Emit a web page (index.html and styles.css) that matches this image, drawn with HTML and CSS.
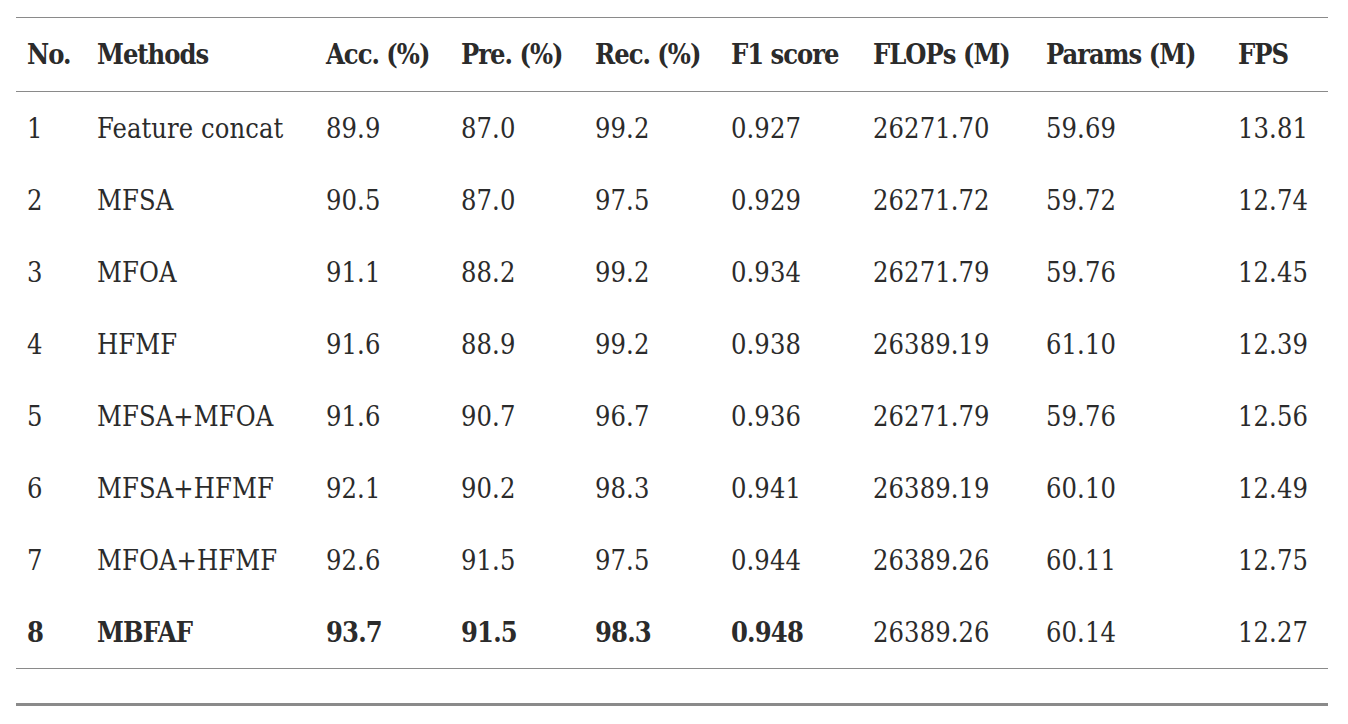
FILE: index.html
```html
<!DOCTYPE html>
<html>
<head>
<meta charset="utf-8">
<link rel="stylesheet" href="styles.css">
</head>
<body>
<div class="wrap">
<table class="tbl">
<colgroup>
<col class="c1"><col class="c2"><col class="c3"><col class="c4"><col class="c5"><col class="c6"><col class="c7"><col class="c8"><col class="c9">
</colgroup>
<thead>
<tr><th>No.</th><th>Methods</th><th>Acc. (%)</th><th>Pre. (%)</th><th>Rec. (%)</th><th>F1 score</th><th>FLOPs (M)</th><th>Params (M)</th><th>FPS</th></tr>
</thead>
<tbody>
<tr><td>1</td><td>Feature concat</td><td>89.9</td><td>87.0</td><td>99.2</td><td>0.927</td><td>26271.70</td><td>59.69</td><td>13.81</td></tr>
<tr><td>2</td><td>MFSA</td><td>90.5</td><td>87.0</td><td>97.5</td><td>0.929</td><td>26271.72</td><td>59.72</td><td>12.74</td></tr>
<tr><td>3</td><td>MFOA</td><td>91.1</td><td>88.2</td><td>99.2</td><td>0.934</td><td>26271.79</td><td>59.76</td><td>12.45</td></tr>
<tr><td>4</td><td>HFMF</td><td>91.6</td><td>88.9</td><td>99.2</td><td>0.938</td><td>26389.19</td><td>61.10</td><td>12.39</td></tr>
<tr><td>5</td><td>MFSA+MFOA</td><td>91.6</td><td>90.7</td><td>96.7</td><td>0.936</td><td>26271.79</td><td>59.76</td><td>12.56</td></tr>
<tr><td>6</td><td>MFSA+HFMF</td><td>92.1</td><td>90.2</td><td>98.3</td><td>0.941</td><td>26389.19</td><td>60.10</td><td>12.49</td></tr>
<tr><td>7</td><td>MFOA+HFMF</td><td>92.6</td><td>91.5</td><td>97.5</td><td>0.944</td><td>26389.26</td><td>60.11</td><td>12.75</td></tr>
<tr class="best"><td class="b">8</td><td class="b">MBFAF</td><td class="b">93.7</td><td class="b">91.5</td><td class="b">98.3</td><td class="b">0.948</td><td>26389.26</td><td>60.14</td><td>12.27</td></tr>
</tbody>
</table>
<div class="foot"></div>
</div>
</body>
</html>
```
FILE: styles.css
```css
html, body {
  margin: 0;
  padding: 0;
  background: #ffffff;
}
.wrap {
  padding: 17px 20px 0 16px;
}
.tbl {
  width: 1312px;
  border-collapse: collapse;
  table-layout: fixed;
  font-family: "DejaVu Serif Condensed", "DejaVu Serif", serif;
  font-size: 27px;
  letter-spacing: 0.1px;
  color: #2b2b2b;
  border-top: 1px solid #8a8a8a;
  border-bottom: 1px solid #8a8a8a;
}
.c1 { width: 70px; }
.c2 { width: 229px; }
.c3 { width: 135px; }
.c4 { width: 134px; }
.c5 { width: 136px; }
.c6 { width: 142px; }
.c7 { width: 173px; }
.c8 { width: 192px; }
.c9 { width: 101px; }
.tbl th, .tbl td {
  text-align: left;
  padding: 0 0 0 11px;
  white-space: nowrap;
}
.tbl th {
  height: 73px;
  font-weight: bold;
  letter-spacing: -1px;
  border-bottom: 1px solid #8a8a8a;
}
.tbl td {
  height: 72px;
  font-weight: normal;
}
.tbl td.b {
  font-weight: bold;
  letter-spacing: -0.8px;
}
.foot {
  width: 1312px;
  height: 3px;
  margin-top: 34px;
  background: #8a8a8a;
}
```
